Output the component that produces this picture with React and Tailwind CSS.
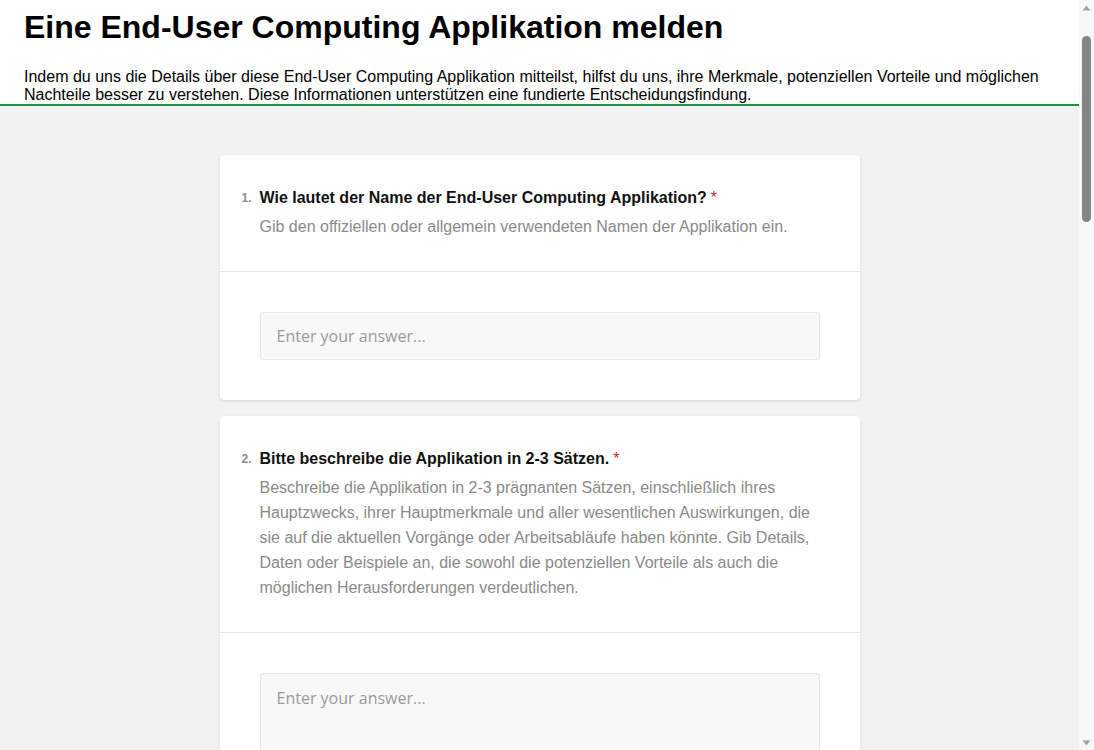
const questions = [
  {
    n: 1,
    title: 'Wie lautet der Name der End-User Computing Applikation?',
    hint: 'Gib den offiziellen oder allgemein verwendeten Namen der Applikation ein.',
    multiline: false,
  },
  {
    n: 2,
    title: 'Bitte beschreibe die Applikation in 2-3 Sätzen.',
    hint: 'Beschreibe die Applikation in 2-3 prägnanten Sätzen, einschließlich ihres Hauptzwecks, ihrer Hauptmerkmale und aller wesentlichen Auswirkungen, die sie auf die aktuellen Vorgänge oder Arbeitsabläufe haben könnte. Gib Details, Daten oder Beispiele an, die sowohl die potenziellen Vorteile als auch die möglichen Herausforderungen verdeutlichen.',
    multiline: true,
  },
]

function QuestionCard({ q }) {
  return (
    <div className="w-[640px] shrink-0 bg-white rounded-[4px] shadow-[0_1px_3px_rgba(0,0,0,0.12)]">
      <div className="flex pl-[22px] pr-10 pt-8 pb-8 border-b border-[#e6e6e6]">
        <span className="w-[18px] shrink-0 text-[12px] leading-[22px] font-bold text-[#8c8c8c]">{q.n}.</span>
        <div className="flex-1">
          <div className="text-[16px] leading-[22px] font-bold text-[#111]">
            {q.title}
            <span className="ml-1 text-[#d2232a] font-normal">*</span>
          </div>
          <p className="mt-[5px] text-[16px] leading-[25px] text-[#8a8a8a]">{q.hint}</p>
        </div>
      </div>
      <div className="px-10 pt-10 pb-10">
        {q.multiline ? (
          <textarea
            placeholder="Enter your answer..."
            className="block w-full h-[140px] resize-none rounded-[3px] border border-[#e8e8e8] bg-[#f8f8f8] px-4 py-[12px] text-[16px] leading-[24px] font-['Open_Sans',sans-serif] placeholder:text-[#9a9a9a] outline-none"
          />
        ) : (
          <input
            placeholder="Enter your answer..."
            className="block w-full h-[48px] rounded-[3px] border border-[#e8e8e8] bg-[#f8f8f8] px-4 text-[16px] font-['Open_Sans',sans-serif] placeholder:text-[#9a9a9a] outline-none"
          />
        )}
      </div>
    </div>
  )
}

export default function App() {
  return (
    <div className="h-screen w-full flex overflow-hidden font-['Liberation_Sans',Arial,sans-serif]">
      <div className="flex-1 min-w-0 flex flex-col bg-[#f2f2f2]">
        <header className="bg-white px-6 pt-[9px] border-b-2 border-[#1a9641]">
          <h1 className="text-[32px] leading-[37px] font-bold text-black">
            Eine End-User Computing Applikation melden
          </h1>
          <p className="mt-[22px] text-[16px] leading-[18px] text-black">
            Indem du uns die Details über diese End-User Computing Applikation mitteilst, hilfst du uns, ihre Merkmale, potenziellen Vorteile und möglichen Nachteile besser zu verstehen. Diese Informationen unterstützen eine fundierte Entscheidungsfindung.
          </p>
        </header>
        <main className="flex flex-col items-center gap-4 pt-[49px] pb-10">
          {questions.map((q) => (
            <QuestionCard key={q.n} q={q} />
          ))}
        </main>
      </div>
      <div className="w-[15px] shrink-0 bg-[#f8f8f8] flex flex-col items-center">
        <div className="h-[15px] flex items-center justify-center">
          <svg width="9" height="6" viewBox="0 0 9 6"><path d="M0.5 5.5 L4.5 0.5 L8.5 5.5 Z" fill="#a3a3a3" /></svg>
        </div>
        <div className="flex-1 flex flex-col items-center">
          <div className="mt-[21px] h-[186px] w-[9px] rounded-full bg-[#858585]" />
        </div>
        <div className="h-[15px] flex items-center justify-center">
          <svg width="9" height="6" viewBox="0 0 9 6"><path d="M0.5 0.5 L8.5 0.5 L4.5 5.5 Z" fill="#a3a3a3" /></svg>
        </div>
      </div>
    </div>
  )
}
